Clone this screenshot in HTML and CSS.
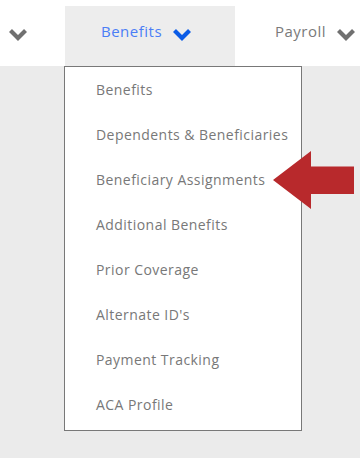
FILE: index.html
```
<!DOCTYPE html>
<html>
<head>
<meta charset="utf-8">
<link rel="stylesheet" href="styles.css">
</head>
<body>
<div class="topbar">
  <div class="nav-item nav-left">
    <svg class="chev" width="20" height="13" viewBox="0 0 20 13"><polyline points="2.5,2.5 10,10 17.5,2.5" /></svg>
  </div>
  <div class="nav-item nav-active">
    <span class="nav-label">Benefits</span>
    <svg class="chev chev-blue" width="20" height="13" viewBox="0 0 20 13"><polyline points="2.5,2.5 10,10 17.5,2.5" /></svg>
  </div>
  <div class="nav-item nav-right">
    <span class="nav-label">Payroll</span>
    <svg class="chev" width="20" height="13" viewBox="0 0 20 13"><polyline points="2.5,2.5 10,10 17.5,2.5" /></svg>
  </div>
</div>
<div class="menu">
  <div class="menu-item">Benefits</div>
  <div class="menu-item">Dependents &amp; Beneficiaries</div>
  <div class="menu-item">Beneficiary Assignments</div>
  <div class="menu-item">Additional Benefits</div>
  <div class="menu-item">Prior Coverage</div>
  <div class="menu-item">Alternate ID's</div>
  <div class="menu-item">Payment Tracking</div>
  <div class="menu-item">ACA Profile</div>
</div>
<svg class="pointer" width="84" height="60" viewBox="0 0 84 60"><polygon points="0,29 38,0 38,15.5 81,15.5 81,43 38,43 38,58" /></svg>
</body>
</html>
```
FILE: styles.css
```
html, body {
  margin: 0;
  padding: 0;
}
body {
  background: #ebebeb;
  font-family: "Open Sans", "Noto Sans", sans-serif;
  width: 360px;
  height: 458px;
  overflow: hidden;
  position: relative;
}
.topbar {
  background: #ffffff;
  height: 66px;
  display: flex;
  align-items: flex-end;
}
.nav-item {
  height: 60px;
  display: flex;
  align-items: center;
  box-sizing: border-box;
  padding-bottom: 10px;
}
.nav-left {
  width: 65px;
  padding-left: 8px;
}
.nav-active {
  width: 170px;
  background: #ededed;
  padding-left: 36px;
}
.nav-right {
  flex: 1;
  padding-left: 40px;
}
.nav-label {
  font-size: 15px;
  color: #7a7a7a;
  margin-right: 10px;
  letter-spacing: 0.5px;
}
.nav-active .nav-label {
  color: #4a7ef6;
}
.chev polyline {
  fill: none;
  stroke: #707070;
  stroke-width: 4.2;
  stroke-linejoin: miter;
  stroke-linecap: butt;
}
.chev-blue polyline {
  stroke: #0b5ce6;
}
.chev {
  margin-top: 7px;
}
.menu {
  margin-left: 64px;
  width: 238px;
  height: 365px;
  box-sizing: border-box;
  border: 1px solid #787878;
  background: #ffffff;
  padding-top: 0;
}
.menu-item {
  height: 45px;
  line-height: 45px;
  padding-left: 31px;
  font-size: 14px;
  color: #787878;
  white-space: nowrap;
  letter-spacing: 0.45px;
}
.pointer {
  position: absolute;
  left: 273px;
  top: 151px;
}
.pointer polygon {
  fill: #b8292c;
}
```
